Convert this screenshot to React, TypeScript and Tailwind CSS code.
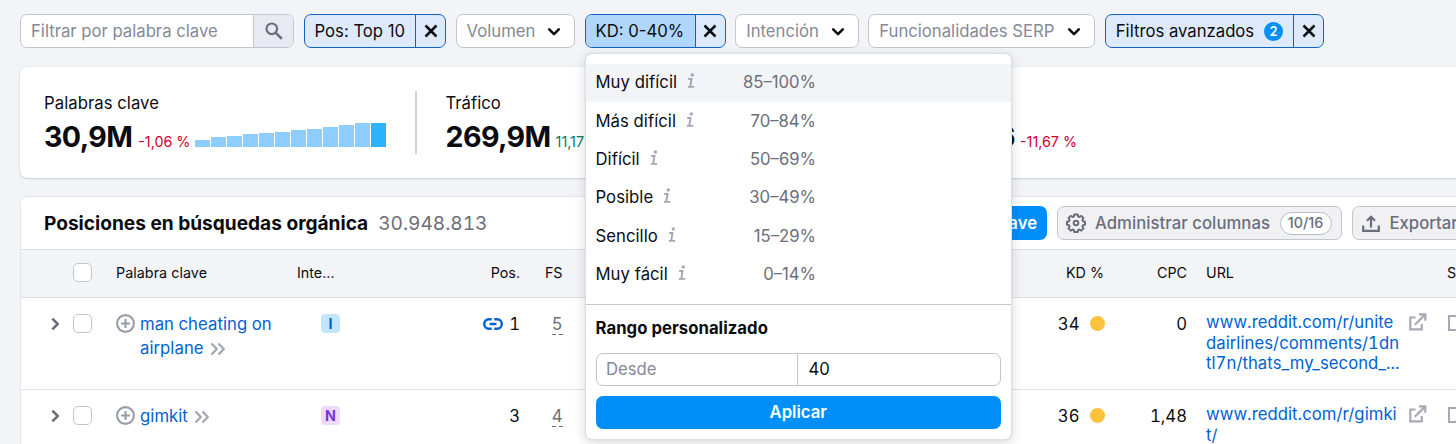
import React from "react";

const cx = "shrink-0";

function Chevron() {
  return (
    <svg className={cx} width="14" height="10" viewBox="0 0 14 10" fill="none" stroke="#0b0c12" strokeWidth="2.6" strokeLinecap="round" strokeLinejoin="round">
      <path d="M2.2 2.4 7 7.2l4.8-4.8" />
    </svg>
  );
}

function Cross() {
  return (
    <svg className={cx} width="14" height="14" viewBox="0 0 14 14" fill="none" stroke="#0b0c12" strokeWidth="2.5">
      <path d="M1.5 1.5l11 11M12.5 1.5l-11 11" />
    </svg>
  );
}

function Info() {
  return (
    <svg className={cx} width="9" height="16" viewBox="0 0 9 16" fill="none" stroke="#a3a6b3" strokeWidth="1.9">
      <circle cx="5.3" cy="1.9" r="1.7" fill="#a3a6b3" stroke="none" />
      <path d="M1.2 6h3.3L3.3 13.5M.9 13.9h6.3" />
    </svg>
  );
}

function Plus() {
  return (
    <svg className="shrink-0" width="19" height="19" viewBox="0 0 19 19" fill="none" stroke="#989ba9" strokeWidth="2.1">
      <circle cx="9.5" cy="9.5" r="8.4" />
      <path d="M9.5 5v9M5 9.5h9" />
    </svg>
  );
}

function DoubleChevron() {
  return (
    <svg className="ml-[6px] inline-block" width="16" height="14" viewBox="0 0 16 14" fill="none" stroke="#a3a6b3" strokeWidth="2.3" strokeLinejoin="round">
      <path d="M1.5 1.5 6.8 7l-5.3 5.5M8.5 1.5 13.8 7l-5.3 5.5" />
    </svg>
  );
}

function External() {
  return (
    <svg width="18" height="18" viewBox="0 0 18 18" fill="none" stroke="#a6a9b5" strokeWidth="2.2">
      <path d="M6.5 4.5H1.3v11.9h11.5V11M10 1.3h6.3v6.5M16 1.6L5.8 11.8" />
    </svg>
  );
}

function LinkIcon() {
  return (
    <svg width="20" height="12" viewBox="0 0 20 12" fill="none" stroke="#0062d1" strokeWidth="2.4">
      <path d="M8.7 1.3H5.9a4.7 4.7 0 0 0 0 9.4h2.8M11.3 1.3h2.8a4.7 4.7 0 0 1 0 9.4h-2.8M6.6 6h6.8" />
    </svg>
  );
}

function Dropdown({ label, width }: { label: string; width: string }) {
  return (
    <div className={`flex h-[34px] shrink-0 items-center justify-between rounded-[7px] border border-[#c2c5d0] bg-white pr-[13px] pl-[10px] text-[#858999] ${width}`}>
      <span className="pt-[1px]">{label}</span>
      <div className="pt-[2px]"><Chevron /></div>
    </div>
  );
}

function ActiveFilter({ children, width, active = false }: { children: React.ReactNode; width: string; active?: boolean }) {
  return (
    <div className={`flex h-[34px] shrink-0 overflow-hidden rounded-[7px] border border-[#0f62c6] bg-[#deeafb] ${width}`}>
      <div className={`flex flex-1 items-center border-r border-[#0f62c6] pt-[1px] pl-[10px] ${active ? "bg-[#b1d6fb]" : ""}`}>{children}</div>
      <div className="flex w-[29px] items-center justify-center"><Cross /></div>
    </div>
  );
}

function Checkbox() {
  return <div className="size-[19px] rounded-[5px] border border-[#c2c5d0] bg-white" />;
}

const levels = [
  ["Muy difícil", "85–100%"],
  ["Más difícil", "70–84%"],
  ["Difícil", "50–69%"],
  ["Posible", "30–49%"],
  ["Sencillo", "15–29%"],
  ["Muy fácil", "0–14%"],
];

const bars = [7, 10, 11, 13, 14, 15, 17.5, 18.5, 20.5, 22.5, 24, 24];

type Row = {
  keyword: string[];
  intent: string;
  intentStyle: string;
  linked: boolean;
  pos: string;
  fs: string;
  kd: string;
  cpc: string;
  url: string[];
};

const rows: Row[] = [
  {
    keyword: ["man cheating on", "airplane"],
    intent: "I",
    intentStyle: "bg-[#c4e5fe] text-[#0a60c8]",
    linked: true,
    pos: "1",
    fs: "5",
    kd: "34",
    cpc: "0",
    url: ["www.reddit.com/r/unite", "dairlines/comments/1dn", "tl7n/thats_my_second_..."],
  },
  {
    keyword: ["gimkit"],
    intent: "N",
    intentStyle: "bg-[#eddafe] text-[#7a35dc]",
    linked: false,
    pos: "3",
    fs: "4",
    kd: "36",
    cpc: "1,48",
    url: ["www.reddit.com/r/gimki", "t/"],
  },
];

function TableRow({ row }: { row: Row }) {
  return (
    <div className="flex h-[92px] border-b border-[#dcdfe6] pt-[14px] leading-[24px] tabular-nums">
      <div className="flex h-[24px] w-[52px] items-center pl-[30px]">
        <svg width="9" height="14" viewBox="0 0 9 14" fill="none" stroke="#6a6d7c" strokeWidth="2.5" strokeLinejoin="round">
          <path d="M1.3 1.7 6.8 7l-5.5 5.3" />
        </svg>
      </div>
      <div className="flex h-[24px] w-[43px] items-center"><Checkbox /></div>
      <div className="flex w-[181px] text-[#0062d1]">
        <div className="flex h-[24px] w-[24px] shrink-0 items-center"><Plus /></div>
        <div className="leading-[24px] tracking-[0.05px] whitespace-nowrap">
          {row.keyword.map((k, i) => (
            <div key={k}>
              {k}
              {i === row.keyword.length - 1 && <DoubleChevron />}
            </div>
          ))}
        </div>
      </div>
      <div className="flex h-[24px] w-[67px] items-center justify-center">
        <div className={`flex size-[19px] items-center justify-center rounded-[4px] text-[14.3px] font-bold ${row.intentStyle}`}>{row.intent}</div>
      </div>
      <div className="flex h-[24px] w-[156px] items-center justify-end gap-[6px]">
        {row.linked && <LinkIcon />}
        <span>{row.pos}</span>
      </div>
      <div className="flex w-[42.5px] flex-col items-end text-[#6c6e79]">
        <span className="h-[22px]">{row.fs}</span>
        <div className="flex gap-[3px]">
          <span className="h-px w-[4px] bg-[#6c6e79]" />
          <span className="h-px w-[4px] bg-[#6c6e79]" />
        </div>
      </div>
      <div className="flex h-[24px] w-[542px] items-center justify-end gap-[10px]">
        <span>{row.kd}</span>
        <span className="size-[15px] rounded-full bg-[#fdc23c]" />
      </div>
      <div className="w-[82.5px] text-right">{row.cpc}</div>
      <div className="w-[222px] pt-[0.5px] pl-[19px] leading-[20.5px] tracking-[0.05px] whitespace-nowrap text-[#0062d1]">
        {row.url.map((u) => (
          <div key={u}>{u}</div>
        ))}
      </div>
      <div className="w-[39px] pt-[1px]"><External /></div>
      <div className="mt-[3px] h-[16px] w-[18px] shrink-0 border-2 border-[#a6a9b5]" />
    </div>
  );
}

export default function App() {
  return (
    <div className="relative h-[444px] w-full overflow-hidden bg-[#f3f4f8] font-['Inter',sans-serif] text-[16.7px] text-[#0b0c12]">
      <div className="flex h-[67px] pt-[14px] pl-[20px] whitespace-nowrap">
        <div className="mr-[9.5px] flex h-[34px] w-[274px] overflow-hidden rounded-[7px] border border-[#c2c5d0] bg-white">
          <div className="flex flex-1 items-center border-r border-[#c2c5d0] pt-[1px] pl-[10px] text-[#858999]">Filtrar por palabra clave</div>
          <div className="flex w-[39px] items-center justify-center bg-[#e8e9f1]">
            <svg width="18" height="18" viewBox="0 0 18 18" fill="none" stroke="#6a6d7c" strokeWidth="2.2">
              <circle cx="6.8" cy="6.8" r="5.3" />
              <path d="M10.6 10.6l6.2 6.2" strokeWidth="2.6" />
            </svg>
          </div>
        </div>
        <div className="flex gap-[9.6px]">
          <ActiveFilter width="w-[142.5px]">Pos: Top 10</ActiveFilter>
          <Dropdown label="Volumen" width="w-[119.4px]" />
          <ActiveFilter width="w-[141px]" active>KD: 0-40%</ActiveFilter>
          <Dropdown label="Intención" width="w-[123.5px]" />
          <Dropdown label="Funcionalidades SERP" width="w-[226.9px]" />
          <ActiveFilter width="w-[219.4px]">
            Filtros avanzados
            <span className="ml-[10px] flex size-[19px] items-center justify-center rounded-full bg-[#008ff8] text-[13px] font-semibold text-white">2</span>
          </ActiveFilter>
        </div>
      </div>

      <div className="ml-[20px] flex h-[111px] w-[1460px] rounded-[7px] bg-white pt-[24px] pl-[24px] whitespace-nowrap shadow-[0_0_1px_rgba(25,27,35,0.2),0_1px_2px_rgba(25,27,35,0.15)]">
        <div className="flex h-[63px] w-[373px] flex-col border-r-2 border-[#cfd2db]">
          <div className="leading-[24px] tracking-[0.05px]">Palabras clave</div>
          <div className="flex h-[38px] items-baseline">
            <span className="text-[28.6px] leading-[44px] font-bold tracking-[-0.6px]">30,9M</span>
            <span className="ml-[6px] text-[14.3px] text-[#d1002f]">-1,06 %</span>
            <div className="ml-[5px] flex items-end gap-[1px]">
              {bars.map((h, i) => (
                <span key={i} className={`w-[15px] ${i === 11 ? "bg-[#2bb3ff]" : "bg-[#8ecdff]"}`} style={{ height: h }} />
              ))}
            </div>
          </div>
        </div>
        <div className="flex w-[520px] flex-col pl-[28.5px]">
          <div className="leading-[24px]">Tráfico</div>
          <div className="flex h-[38px] items-baseline">
            <span className="text-[28.6px] leading-[44px] font-bold tracking-[-0.6px]">269,9M</span>
            <span className="ml-[5px] text-[14.3px] text-[#007c65]">11,17 %</span>
          </div>
        </div>
        <div className="flex flex-col pt-[24px]">
          <div className="flex h-[38px] w-[140px] items-baseline justify-end">
            <span className="text-[28.6px] leading-[44px] font-bold tracking-[-0.6px]">6</span>
            <span className="ml-[5px] text-[14.3px] text-[#d1002f]">-11,67 %</span>
          </div>
        </div>
      </div>

      <div className="mt-[18px] ml-[20px] w-[1490px] rounded-tl-[7px] border-t border-l border-[#e3e5ec] bg-white whitespace-nowrap">
        <div className="flex h-[52px] items-center">
          <div className="w-[930px] pt-[1px] pl-[23px] text-[19.1px]">
            <span className="font-bold">Posiciones en búsquedas orgánica</span>
            <span className="ml-[10px] text-[#6c6e79] tabular-nums">30.948.813</span>
          </div>
          <div className="flex h-[34px] w-[96px] items-center justify-end rounded-[7px] bg-[#008ff8] pt-[1px] pr-[10px] font-semibold text-white">clave</div>
          <div className="ml-[10px] flex h-[34px] w-[285px] items-center rounded-[7px] border border-[#c2c5d0] bg-[#f1f1f4] pl-[8px] font-medium text-[#6a6d7c]">
            <svg width="20" height="20" viewBox="0 0 20 20" fill="none" stroke="#6a6d7c" strokeWidth="2" strokeLinejoin="round">
              <path d="M8.3 1.4h3.4l.5 2.1 1.2.5 1.9-1.1 2.2 2.2-1.1 1.9.5 1.2 2.1.5v3l-2.1.6-.5 1.2 1.1 1.9-2.2 2.2-1.9-1.1-1.2.5-.5 2.1H8.3l-.5-2.1-1.2-.5-1.9 1.1-2.2-2.2 1.1-1.9-.5-1.2-2.1-.6v-3l2.1-.5.5-1.2-1.1-1.9 2.2-2.2L6.6 4l1.2-.5z" />
              <circle cx="10" cy="10" r="2.3" />
            </svg>
            <span className="ml-[9px] pt-[1px] tracking-[0.05px]">Administrar columnas</span>
            <span className="ml-[9.5px] flex h-[23px] w-[52px] items-center justify-center rounded-full border border-[#b8bbc7] bg-white text-[14.3px]">10/16</span>
          </div>
          <div className="ml-[10px] flex h-[34px] w-[140px] items-center rounded-[7px] border border-[#c2c5d0] bg-[#f1f1f4] pl-[9px] font-medium text-[#6a6d7c]">
            <svg width="18" height="17" viewBox="0 0 18 17" fill="none" stroke="#6a6d7c" strokeWidth="2.2">
              <path d="M1.2 10.5v5.3h15.6v-5.3M9 12.5V2M5 5.8 9 1.800l4 4" />
            </svg>
            <span className="ml-[9.5px] pt-[1px]">Exportar</span>
          </div>
        </div>
        <div className="flex h-[48.5px] items-center border-y border-[#dcdfe6] bg-[#f3f4f8] pb-[1px] text-[14.3px]">
          <div className="w-[52px]" />
          <div className="w-[43px]"><Checkbox /></div>
          <div className="w-[181px] tracking-[0.05px]">Palabra clave</div>
          <div className="w-[67px]">Inte...</div>
          <div className="w-[156px] text-right">Pos.</div>
          <div className="w-[42.5px] text-right">FS</div>
          <div className="w-[541.5px] text-right">KD %</div>
          <div className="w-[83px] text-right">CPC</div>
          <div className="w-[260px] pl-[19px]">URL</div>
          <div>S</div>
        </div>
        {rows.map((r) => (
          <TableRow key={r.pos} row={r} />
        ))}
      </div>

      <div className="absolute top-[53px] left-[585px] flex h-[387px] w-[426.5px] flex-col rounded-[7px] border border-[#dcdfe6] bg-white pt-[10px] shadow-[0_0_1px_rgba(25,27,35,0.16),0_3px_12px_rgba(25,27,35,0.16)]">
        {levels.map(([name, range], i) => (
          <div key={name} className={`flex h-[38.4px] shrink-0 items-center justify-between pr-[194.5px] pb-[0.8px] pl-[9.5px] ${i === 0 ? "bg-[#f3f4f8]" : ""}`}>
            <div className="flex items-center gap-[10px]">
              <span className="tracking-[0.04px]">{name}</span>
              <div className="-mt-[3px]"><Info /></div>
            </div>
            <span className="text-[#6c6e79]">{range}</span>
          </div>
        ))}
        <div className="mt-[9.2px] border-t border-[#c4c7d0] px-[9.5px] pt-[10.5px]">
          <div className="leading-[26px] font-bold tracking-[0.04px]">Rango personalizado</div>
          <div className="mt-[11.5px] flex h-[33.5px] items-center rounded-[7px] border border-[#c2c5d0]">
            <div className="flex h-full w-[201px] items-center border-r border-[#c2c5d0] pl-[9.5px] text-[#858999]">Desde</div>
            <div className="pl-[11px]">40</div>
          </div>
          <div className="mt-[9.5px] flex h-[33.5px] items-center justify-center rounded-[7px] bg-[#008ff8] font-semibold text-white">Aplicar</div>
        </div>
      </div>
    </div>
  );
}
